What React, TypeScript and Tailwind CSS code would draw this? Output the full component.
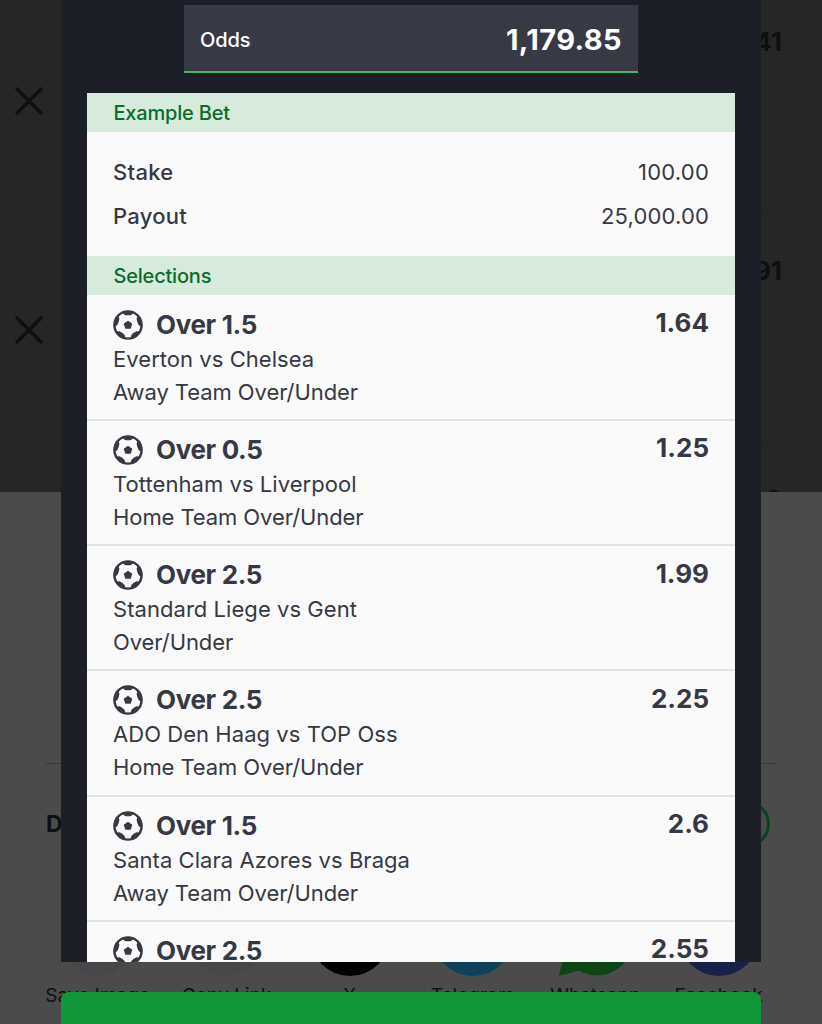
import React from 'react';
import { X } from 'lucide-react';

interface Selection {
  pick: string;
  match: string;
  market: string;
  odds: string;
}

const SELECTIONS: Selection[] = [
  { pick: 'Over 1.5', match: 'Everton vs Chelsea', market: 'Away Team Over/Under', odds: '1.64' },
  { pick: 'Over 0.5', match: 'Tottenham vs Liverpool', market: 'Home Team Over/Under', odds: '1.25' },
  { pick: 'Over 2.5', match: 'Standard Liege vs Gent', market: 'Over/Under', odds: '1.99' },
  { pick: 'Over 2.5', match: 'ADO Den Haag vs TOP Oss', market: 'Home Team Over/Under', odds: '2.25' },
  { pick: 'Over 1.5', match: 'Santa Clara Azores vs Braga', market: 'Away Team Over/Under', odds: '2.6' },
  { pick: 'Over 2.5', match: '', market: '', odds: '2.55' },
];

const SHARE_ITEMS = [
  { label: 'Save Image', width: 'w-[135px]', color: 'w-[72px] bg-[#47474a]' },
  { label: 'Copy Link', width: 'w-[123px]', color: 'w-[72px] bg-[#47474a]' },
  { label: 'X', width: 'w-[123px]', color: 'w-20 bg-black' },
  { label: 'Telegram', width: 'w-[123px]', color: 'w-20 bg-[#11405a]' },
  { label: 'Whatsapp', width: 'w-[123px]', color: '' },
  { label: 'Facebook', width: 'w-[123px]', color: 'w-20 bg-[#182148]' },
];

const SoccerBall: React.FC = () => (
  <svg viewBox="0 0 30 30" className="w-[30px] h-[30px] shrink-0">
    <circle cx="15" cy="15" r="13.6" fill="none" stroke="#363944" strokeWidth="2.4" />
    <g fill="#363944">
      <path d="M15 10.7l4.3 3.1-1.6 5h-5.4l-1.6-5z" />
      {[0, 72, 144, 216, 288].map((deg) => (
        <path key={deg} d="M9.2 1.8Q10.4 4.2 11.8 4.9Q15 5.6 18.2 4.9Q19.6 4.2 20.8 1.8Q15 0 9.2 1.8z" transform={`rotate(${deg} 15 15)`} />
      ))}
    </g>
  </svg>
);

const SectionTitle: React.FC<{ children: React.ReactNode }> = ({ children }) => (
  <h2 className="h-[39px] shrink-0 bg-[#d6ebdc] px-[26.5px] text-[20px] leading-[40px] font-medium tracking-[-0.2px] text-[#0a6b2c]">
    {children}
  </h2>
);

const SelectionRow: React.FC<{ item: Selection }> = ({ item }) => (
  <li className="h-[125.3px] shrink-0 border-b-2 border-[#e0e2e9] px-[26px] pt-[13px]">
    <div className="flex items-start justify-between text-[26px] leading-[32px] font-bold">
      <div className="flex items-center gap-[13px]">
        <SoccerBall />
        <span className="tracking-[-0.35px]">{item.pick}</span>
      </div>
      <span className="-mt-[1.5px]">{item.odds}</span>
    </div>
    <p className="mt-[2px] text-[22px] leading-[33px] tracking-[0.05px]">{item.match}</p>
    <p className="text-[22px] leading-[33px] tracking-[-0.08px]">{item.market}</p>
  </li>
);

// Betslip and share sheet, already dimmed by the backdrop
const DimmedPage: React.FC = () => (
  <div className="flex h-full flex-col bg-[#4b4b4b] text-[#0e0f11]">
    <div className="h-[492px] shrink-0 overflow-hidden bg-[#262626]">
      {['41', '91'].map((price, i) => (
        <div key={price} className={`flex justify-between border-b border-[#222222] pr-10 pl-[5px] ${i === 0 ? 'h-[215px] pt-[22px]' : 'h-[230px] pt-[36px]'}`}>
          <X size={48} strokeWidth={1.7} className="mt-[55px]" />
          <span className="text-[26px] leading-[40px] font-bold">{price}</span>
        </div>
      ))}
      <div className="flex justify-end pt-[39px] pr-10 text-[26px] leading-[32px] font-bold">2</div>
    </div>
    <div className="mx-[46px] mt-[271px] border-t border-[#39393b]" />
    <div className="mr-[52px] ml-[46px] mt-[37px] flex h-[46px] shrink-0 items-center justify-between">
      <span className="text-[23px] font-bold">Deposit</span>
      <span className="h-[46px] w-[46px] rounded-full border-[3px] border-[#07431d]" />
    </div>
    <div className="mt-[49px] flex pl-[30px]">
      {SHARE_ITEMS.map((item) => (
        <div key={item.label} className={`flex shrink-0 flex-col items-center ${item.width}`}>
          {item.label === 'Whatsapp' ? (
            <svg viewBox="0 0 80 80" className="h-20 w-20">
              <circle cx="41" cy="43.5" r="36" fill="#0f4417" />
              <path d="M3 80L8 58L30 58L32 74L23 74.5z" fill="#0f4417" />
            </svg>
          ) : (
            <span className={`h-20 rounded-full ${item.color}`} />
          )}
          <span className="mt-[8px] text-[19px] leading-[24px] whitespace-nowrap">{item.label}</span>
        </div>
      ))}
    </div>
  </div>
);

const App: React.FC = () => {
  return (
    <div className="relative h-[1024px] w-[822px] overflow-hidden font-['Inter','Liberation_Sans',sans-serif]">
      <DimmedPage />

      {/* Modal */}
      <div className="absolute inset-0 flex flex-col px-[61px]">
        <div className="flex h-[962px] shrink-0 flex-col overflow-hidden bg-[#1c1f27] px-[26px] pt-[5px]">
          <div className="mx-auto flex h-[68px] w-[454px] shrink-0 items-center justify-between border-b-2 border-[#3dbb62] bg-[#373a44] pt-[3px] pr-4 pl-4 text-white">
            <span className="text-[20px] font-medium tracking-[-0.1px]">Odds</span>
            <span className="text-[29px] leading-[40px] font-bold tracking-[0.4px]">1,179.85</span>
          </div>

          <div className="mt-5 flex w-[648px] flex-col bg-[#fafafa] text-[#363944]">
            <SectionTitle>Example Bet</SectionTitle>
            <dl className="flex h-[124px] shrink-0 flex-col px-[26px] pt-[18px] text-[22px] leading-[44px]">
              <div className="flex justify-between">
                <dt className="font-medium tracking-[0.3px]">Stake</dt>
                <dd className="tracking-[0.2px]">100.00</dd>
              </div>
              <div className="flex justify-between">
                <dt className="font-medium tracking-[0.25px]">Payout</dt>
                <dd className="tracking-[0.15px]">25,000.00</dd>
              </div>
            </dl>
            <SectionTitle>Selections</SectionTitle>
            <ul className="flex flex-col pt-[0.5px]">
              {SELECTIONS.map((item, i) => (
                <SelectionRow key={i} item={item} />
              ))}
            </ul>
          </div>
        </div>

        <button className="mt-[30px] h-20 shrink-0 rounded-t-lg bg-[#0f9738]" aria-label="Confirm" />
      </div>
    </div>
  );
};

export default App;
